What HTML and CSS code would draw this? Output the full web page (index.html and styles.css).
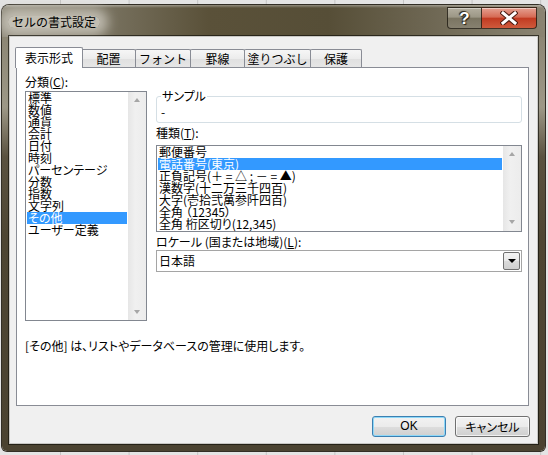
FILE: index.html
```html
<!DOCTYPE html>
<html lang="ja">
<head>
<meta charset="utf-8">
<title>セルの書式設定</title>
<link rel="stylesheet" href="styles.css">
</head>
<body>
<div class="desktop">
  <div class="window">
    <div class="titlebar">
      <span class="title">セルの書式設定</span>
      <div class="caption-btns">
        <div class="cbtn help"><span class="q">?</span></div>
        <div class="cbtn close">
          <svg width="18" height="14" viewBox="0 0 18 14">
            <path d="M3 2 L15 12 M15 2 L3 12" stroke="#4a1a10" stroke-width="5" stroke-linecap="square" fill="none"/>
            <path d="M3 2 L15 12 M15 2 L3 12" stroke="#ffffff" stroke-width="3" stroke-linecap="square" fill="none"/>
          </svg>
        </div>
      </div>
    </div>
    <div class="frame">
      <div class="client">
        <div class="tabs">
          <div class="tab active w1">表示形式</div>
          <div class="tab w2">配置</div>
          <div class="tab w3">フォント</div>
          <div class="tab w4">罫線</div>
          <div class="tab w5">塗りつぶし</div>
          <div class="tab w6">保護</div>
        </div>
        <div class="panel">
          <div class="panel-main">
            <div class="left-col">
              <div class="label">分類(<u>C</u>):</div>
              <div class="listbox cat">
                <ul class="items">
                  <li>標準</li>
                  <li>数値</li>
                  <li>通貨</li>
                  <li>会計</li>
                  <li>日付</li>
                  <li>時刻</li>
                  <li>パーセンテージ</li>
                  <li>分数</li>
                  <li>指数</li>
                  <li>文字列</li>
                  <li class="sel">その他</li>
                  <li>ユーザー定義</li>
                </ul>
                <div class="vscroll"><span class="arr up"></span><span class="arr down"></span></div>
              </div>
            </div>
            <div class="right-col">
              <fieldset class="sample">
                <legend>サンプル</legend>
                <div class="sample-val">-</div>
              </fieldset>
              <div class="label type-label">種類(<u>T</u>):</div>
              <div class="listbox types">
                <ul class="items">
                  <li>郵便番号</li>
                  <li class="sel">電話番号(東京)</li>
                  <li>正負記号(＋ = △ ; － = ▲)</li>
                  <li>漢数字(十二万三千四百)</li>
                  <li>大字(壱拾弐萬参阡四百)</li>
                  <li>全角 （12345）</li>
                  <li>全角 桁区切り(12,345)</li>
                </ul>
                <div class="vscroll"><span class="arr up"></span><span class="arr down"></span></div>
              </div>
              <div class="label locale-label">ロケール (国または地域)(<u>L</u>):</div>
              <div class="combo">
                <span class="combo-val">日本語</span>
                <span class="drop"><span class="tri"></span></span>
              </div>
            </div>
          </div>
          <div class="desc">[その他] は、リストやデータベースの管理に使用します。</div>
        </div>
        <div class="buttons">
          <div class="btn default">OK</div>
          <div class="btn">キャンセル</div>
        </div>
      </div>
    </div>
  </div>
</div>
</body>
</html>
```

FILE: styles.css
```css
* { box-sizing: border-box; }
html, body { margin: 0; padding: 0; }
body {
  width: 548px;
  height: 455px;
  overflow: hidden;
  background: #e4e4e4 linear-gradient(to right, #c4c4c4 1px, transparent 1px) 60px 0 / 68.6px 100% repeat-x;
  font-family: "Noto Sans CJK JP", "Noto Sans", sans-serif;
  font-size: 12px;
  line-height: 12px;
  color: #000;
  font-feature-settings: "palt";
}
.desktop { padding: 5px 0 0 2px; }
.window {
  width: 543px;
  height: 446px;
  display: flex;
  flex-direction: column;
  border-radius: 7px 7px 5px 5px;
  box-shadow: 0 0 0 1px rgba(30, 26, 16, 0.9);
}
.titlebar {
  height: 32px;
  flex: none;
  display: flex;
  align-items: flex-start;
  justify-content: space-between;
  border-radius: 7px 7px 0 0;
  background:
    linear-gradient(to bottom, rgba(255,255,255,0.35) 0, rgba(255,255,255,0) 3px),
    linear-gradient(to right, #8e897a 0%, #7a7462 18%, #5a5139 38%, #564e37 60%, #6d6652 78%, #8a8472 100%);
}
.title {
  margin: 11px 0 0 6px;
  padding: 0 4px;
  line-height: 12px;
  font-feature-settings: normal;
  color: #000;
  background: rgba(206, 202, 192, 0.85);
  border-radius: 6px;
  box-shadow: 0 0 12px 8px rgba(206, 202, 192, 0.8);
}
.caption-btns {
  display: flex;
  margin: 2px 8px 0 0;
}
.cbtn {
  height: 22px;
  display: flex;
  align-items: center;
  justify-content: center;
  border: 1px solid rgba(35, 30, 20, 0.85);
}
.help {
  width: 34px;
  border-right: none;
  border-radius: 0 0 0 4px;
  background: linear-gradient(to bottom, #b3ae9f 0%, #9c9786 45%, #7b7562 52%, #878170 100%);
  box-shadow: inset 0 1px 0 rgba(255,255,255,0.4);
}
.q {
  font-family: "Liberation Sans", "DejaVu Sans", sans-serif;
  font-weight: bold;
  font-size: 17px;
  line-height: 17px;
  color: #fff;
  text-shadow: 0 0 1px #2a2418, 1px 1px 1px #2a2418, -1px -1px 1px #2a2418;
}
.close {
  width: 56px;
  border-radius: 0 0 4px 0;
  background: linear-gradient(to bottom, #e5a091 0%, #d66b55 45%, #c23b22 52%, #cf5a3c 100%);
  box-shadow: inset 0 1px 0 rgba(255,255,255,0.45);
}
.frame {
  flex: 1;
  padding: 0 8px 8px 8px;
  border-radius: 0 0 5px 5px;
  background: linear-gradient(to bottom, #8c8674 0, #9d9887 70px, #5a5240 120px, #4e4633 200px, #4b4331 100%);
}
.client {
  height: 406px;
  background: #f0f0f0;
  display: flex;
  flex-direction: column;
  box-shadow: 0 0 0 1px rgba(255,255,255,0.75), 0 0 0 2px rgba(20, 18, 12, 0.7);
}
.tabs {
  height: 30px;
  flex: none;
  display: flex;
  align-items: flex-end;
  padding-left: 5px;
}
.tab {
  position: relative;
  height: 18px;
  border: 1px solid #898c95;
  border-bottom: none;
  margin-right: -1px;
  text-align: center;
  line-height: 17px;
  font-feature-settings: normal;
  background: linear-gradient(to bottom, #f6f6f6 0%, #ececec 50%, #e0e0e0 51%, #e6e6e6 100%);
  border-radius: 2px 2px 0 0;
}
.tab.active {
  height: 21px;
  line-height: 20px;
  margin-right: -2px;
  margin-bottom: -1px;
  background: #fff;
  z-index: 3;
}
.w1 { width: 68px; }
.w2 { width: 55px; }
.w3 { width: 56px; }
.w4 { width: 55px; }
.w5 { width: 67px; }
.w6 { width: 52px; }
.panel {
  position: relative;
  z-index: 1;
  margin-left: 6px;
  width: 513px;
  height: 339px;
  flex: none;
  border: 1px solid #898c95;
  background: #fff;
}
.panel-main {
  display: flex;
  padding: 8px 0 0 8px;
}
.left-col { width: 122px; }
.label { height: 12px; white-space: nowrap; }
.label u { text-underline-offset: 1px; }
.listbox {
  display: flex;
  border: 1px solid #828790;
  background: #fff;
}
.cat { margin-top: 3px; height: 230px; }
.items {
  flex: 1;
  list-style: none;
  margin: 0;
  padding: 0 1px 0 1px;
}
.items li {
  height: 12px;
  line-height: 12px;
  padding-left: 1px;
  white-space: nowrap;
}
.items li.sel { background: #3399ff; color: #fff; }
.vscroll {
  width: 18px;
  flex: none;
  display: flex;
  flex-direction: column;
  justify-content: space-between;
  align-items: center;
  padding: 6px 0 6px 0;
  background: linear-gradient(to right, #e6e6e6, #f0f0f0 40%, #ececec);
}
.arr {
  width: 0;
  height: 0;
  border-left: 3.5px solid transparent;
  border-right: 3.5px solid transparent;
}
.arr.up { border-bottom: 4px solid #a6a6a6; }
.arr.down { border-top: 4px solid #a6a6a6; }
.right-col {
  margin-left: 9px;
  width: 366px;
  padding-top: 14px;
}
.sample {
  margin: 0;
  height: 33px;
  padding: 4px 4px 0 4px;
  border: 1px solid #d5dfe5;
  border-radius: 3px;
  box-shadow: inset 0 0 0 1px #fff;
}
.sample legend {
  padding: 0 1px;
  margin-left: 0;
  line-height: 12px;
}
.sample-val { line-height: 12px; }
.type-label { margin-top: 4px; }
.types { margin-top: 6px; height: 87px; }
.types .vscroll { padding: 6px 0 7px 0; }
.locale-label { margin-top: 4px; }
.combo {
  margin-top: 2px;
  height: 22px;
  border: 1px solid #a5a5a5;
  display: flex;
  align-items: center;
  justify-content: space-between;
  padding: 1px 1px 1px 2px;
}
.combo-val { line-height: 12px; }
.drop {
  width: 17px;
  height: 18px;
  border: 1px solid #707070;
  border-radius: 2px;
  background: linear-gradient(to bottom, #f4f4f4 0%, #e9e9e9 50%, #dadada 51%, #cfcfcf 100%);
  display: flex;
  align-items: center;
  justify-content: center;
}
.tri {
  width: 0;
  height: 0;
  border-left: 4px solid transparent;
  border-right: 4px solid transparent;
  border-top: 4px solid #000;
}
.desc {
  margin-top: 19px;
  padding-left: 8px;
  white-space: nowrap;
}
.buttons {
  display: flex;
  justify-content: flex-end;
  gap: 9px;
  padding-right: 7px;
  margin-top: 10px;
}
.btn {
  width: 74px;
  height: 21px;
  border: 1px solid #707070;
  border-radius: 3px;
  text-align: center;
  line-height: 19px;
  background: linear-gradient(to bottom, #f2f2f2 0%, #ebebeb 50%, #dddddd 51%, #cfcfcf 100%);
  box-shadow: inset 0 0 0 1px rgba(255,255,255,0.7);
}
.btn + .btn { width: 75px; }
.btn.default {
  border-color: #3c7fb1;
  box-shadow: inset 0 0 0 1px #8ed8f8;
  font-family: "Liberation Sans", sans-serif;
}
```
